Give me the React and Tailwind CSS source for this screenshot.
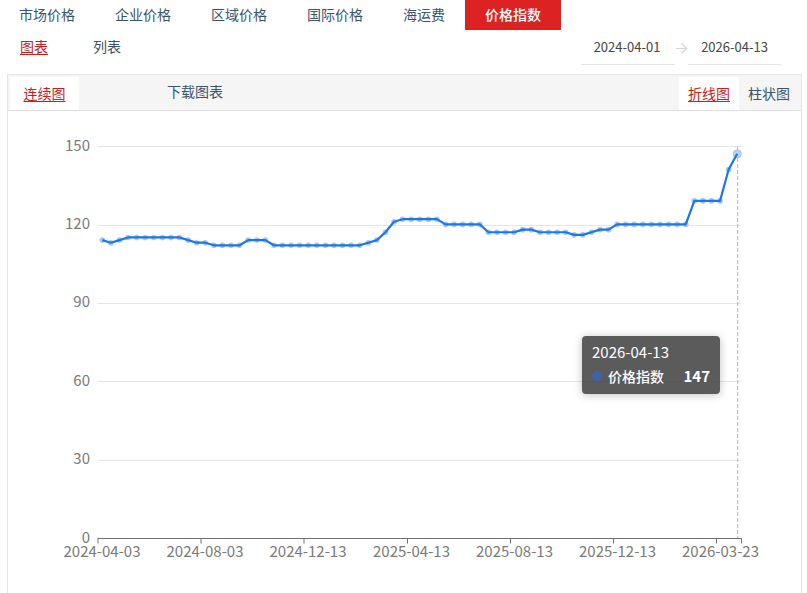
import React from 'react';

const FONT = { fontFamily: '"Noto Sans CJK SC", "Noto Sans", sans-serif' };

const tabs = ['市场价格', '企业价格', '区域价格', '国际价格', '海运费', '价格指数'];

const values = [
  114, 113, 114, 115, 115, 115, 115, 115, 115, 115, 114, 113, 113, 112, 112, 112, 112, 114, 114, 114,
  112, 112, 112, 112, 112, 112, 112, 112, 112, 112, 112, 113, 114, 117, 121, 122, 122, 122, 122, 122,
  120, 120, 120, 120, 120, 117, 117, 117, 117, 118, 118, 117, 117, 117, 117, 116, 116, 117, 118, 118,
  120, 120, 120, 120, 120, 120, 120, 120, 120, 129, 129, 129, 129, 141, 147,
];

const xAt = (i) => 102.3 + 8.58 * i;
const yAt = (v) => 538 - v * 2.6133;
const points = values.map((v, i) => `${xAt(i)},${yAt(v)}`).join(' ');

const yLabels = [0, 30, 60, 90, 120, 150];
const gridRows = [146, 225, 303, 381, 460];
const xLabels = [
  [98, '2024-04-03'],
  [201, '2024-08-03'],
  [304, '2024-12-13'],
  [407.5, '2025-04-13'],
  [510.5, '2025-08-13'],
  [613.5, '2025-12-13'],
  [716.5, '2026-03-23'],
];

function Chart() {
  return (
    <svg width="793" height="482" viewBox="8 111 793 482" className="block">
      {gridRows.map((row) => (
        <line key={row} x1="98" x2="741" y1={row + 0.5} y2={row + 0.5} stroke="#e4e6ea" />
      ))}
      {yLabels.map((v) => (
        <text key={v} x="90" y={yAt(v) + 4.5} textAnchor="end" fontSize="15" fill="#7a7a7a">{v}</text>
      ))}
      <line x1="98" x2="741.5" y1="538.5" y2="538.5" stroke="#6e7079" />
      {[...xLabels.map((l) => l[0]), 741.5].map((x) => (
        <line key={x} x1={x} x2={x} y1="538" y2="543.5" stroke="#6e7079" />
      ))}
      {xLabels.map(([x, label]) => (
        <text key={label} x={x + 4} y="557" textAnchor="middle" fontSize="15" fill="#7a7a7a">{label}</text>
      ))}
      <line x1="737.7" x2="737.7" y1="146" y2="538" stroke="#b5b5b5" strokeDasharray="4 2" />
      {values.map((v, i) => (
        <circle key={i} cx={xAt(i)} cy={yAt(v)} r="2.8" fill="#a3c8f8" />
      ))}
      <circle cx={xAt(74)} cy={yAt(147)} r="4" fill="#b9d3f5" stroke="#a5c1e8" />
      <polyline points={points} fill="none" stroke="#1f76e0" strokeWidth="2.2" strokeLinejoin="round" />
    </svg>
  );
}

export default function App() {
  return (
    <div className="h-[593px] w-[807px] overflow-hidden bg-white text-[14px] text-[#38536b]" style={FONT}>
      {/* top tabs */}
      <div className="-ml-px flex h-[30px]">
        {tabs.map((t, i) => (
          <div
            key={t}
            className={
              i === 5
                ? 'flex items-center bg-[#dc2222] px-5 pb-[2px] font-medium text-white'
                : 'flex items-center px-5 pb-[2px]'
            }
          >
            {t}
          </div>
        ))}
      </div>

      {/* chart / list switch and dates */}
      <div className="flex h-[44px] items-start justify-between pr-[26px]">
        <div className="flex gap-[45px] pl-[20px] pt-[6px]">
          <span className="text-[#c9201f] underline underline-offset-2">图表</span>
          <span>列表</span>
        </div>
        <div className="flex items-start text-[13px] text-[#444]">
          <div className="flex h-[35px] w-[94px] items-center justify-center border-b border-[#e4e4e4] pr-[2px]">2024-04-01</div>
          <svg width="13" height="35" viewBox="0 0 13 35" className="block" fill="none" stroke="#d4d4d4" strokeWidth="1.2">
            <path d="M1 18.5h10M6.5 13.5l5 5-5 5" />
          </svg>
          <div className="flex h-[35px] w-[93px] items-center justify-center border-b border-[#e4e4e4]">2026-04-13</div>
        </div>
      </div>

      {/* chart panel */}
      <div className="ml-[7px] mr-[5px] h-[600px] border border-[#e6e6e6]">
        <div className="flex h-[36px] items-end justify-between border-b border-[#dfdfdf] bg-[#f5f5f5] pl-[2px] pr-[11px]">
          <div className="flex">
            <div className="flex h-[33px] w-[69px] items-center justify-center bg-white text-[#c9201f] underline underline-offset-2">连续图</div>
            <div className="ml-[88px] flex h-[33px] items-center pb-1">下载图表</div>
          </div>
          <div className="flex">
            <div className="flex h-[33px] w-[60px] items-center justify-center bg-white text-[#c9201f] underline underline-offset-2">折线图</div>
            <div className="ml-[9px] flex h-[33px] items-center">柱状图</div>
          </div>
        </div>
        <div className="relative">
          <Chart />
          <div className="absolute left-[574px] top-[225px] h-[58px] w-[138px] rounded bg-[#323232]/80 px-[10px] pt-[5px] text-white shadow-[0_1px_8px_rgba(0,0,0,0.25)]">
            <div className="text-[15px] leading-[22px]">2026-04-13</div>
            <div className="mt-[2px] flex items-center leading-[22px]">
              <span className="mr-[6px] h-[10px] w-[10px] shrink-0 rounded-full bg-[#3f62a8]" />
              <span className="font-medium">价格指数</span>
              <span className="ml-auto text-[15px] font-bold">147</span>
            </div>
          </div>
        </div>
      </div>
    </div>
  );
}
